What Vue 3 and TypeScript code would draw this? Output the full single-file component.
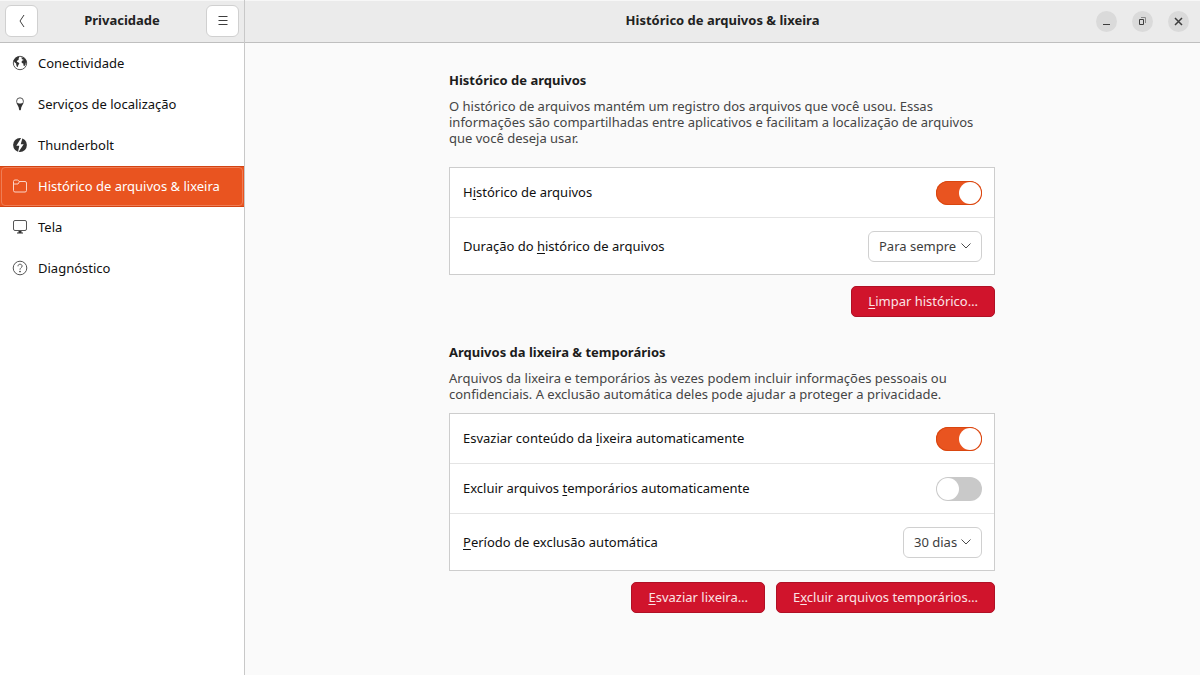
<script setup lang="ts">
import { ref } from 'vue'

interface Mnemonic {
  before: string
  key: string
  after: string
}

interface NavItem {
  id: string
  label: string
}

const navItems: NavItem[] = [
  { id: 'connectivity', label: 'Conectividade' },
  { id: 'location', label: 'Serviços de localização' },
  { id: 'thunderbolt', label: 'Thunderbolt' },
  { id: 'history', label: 'Histórico de arquivos & lixeira' },
  { id: 'screen', label: 'Tela' },
  { id: 'diagnostics', label: 'Diagnóstico' },
]

const active = ref('history')

const keepHistory = ref(true)
const emptyTrash = ref(true)
const deleteTemp = ref(false)
const historyDuration = ref('Para sempre')
const deletePeriod = ref('30 dias')

const durations = ['1 dia', '7 dias', '30 dias', 'Para sempre']
const periods = ['1 hora', '1 dia', '7 dias', '30 dias']

const trashButtons: Mnemonic[] = [
  { before: '', key: 'E', after: 'svaziar lixeira…' },
  { before: 'E', key: 'x', after: 'cluir arquivos temporários…' },
]
</script>

<template>
  <div class="window">
    <aside class="sidebar">
      <header class="bar side-bar">
        <button class="tool" type="button" aria-label="Voltar">
          <svg width="16" height="16" viewBox="0 0 16 16"><path d="M10 2 6 8l4 6" /></svg>
        </button>
        <h2 class="bar-title">Privacidade</h2>
        <button class="tool" type="button" aria-label="Menu">
          <svg width="16" height="16" viewBox="0 0 16 16"><path d="M3.5 3.5h9M3.5 7.5h9M3.5 11.5h9" /></svg>
        </button>
      </header>
      <nav class="nav">
        <a
          v-for="item in navItems"
          :key="item.id"
          href="#"
          class="nav-item"
          :class="{ active: item.id === active }"
          :aria-current="item.id === active ? 'page' : undefined"
          @click.prevent="active = item.id"
        >
          <svg class="nav-icon" width="16" height="16" viewBox="0 0 16 16" aria-hidden="true">
            <g v-if="item.id === 'connectivity'">
              <circle class="line" cx="8" cy="8" r="6.7" />
              <path class="solid" d="M1.6 5.6 3.8 2.6l2.6-1 .9.8L6.4 4l.4.8-1.5.8-.5 1.2 1.7.7.9 1.1-1.1 1.3-.5 1.8-.8.4-.7-2-.2-1.7L2.500 7.300z" />
              <path class="solid" d="m9.400 2.300 2.700.400 1.900 2.200.7 2.600-.9.200-.3 2-1.300 1.500-.7-.6-.2-2-1.400-.7-.4-1.200.9-1.300 1.100-.2-.4-.9-1.100.1z" />
            </g>
            <g v-else-if="item.id === 'location'">
              <path class="line" d="M4.6 5.2a3.4 3.4 0 0 1 6.8 0c0 1-.4 1.9-.9 2.8h-5c-.5-.9-.9-1.8-.9-2.8z" />
              <path class="solid" d="M4.7 7 8 8l3.300-1c-.5 1.900-2.300 3.600-2.400 6.700L8 14.500l-.9-.8C7 10.600 5.200 8.900 4.700 7z" />
            </g>
            <g v-else-if="item.id === 'thunderbolt'">
              <circle class="solid" cx="8" cy="8" r="6.9" />
              <path class="bolt" d="M9.800 0 4.300 8.700h3L5.800 16l5.900-8.700h-3L10.800 0z" />
            </g>
            <g v-else-if="item.id === 'history'">
              <path class="line" d="M1.500 12.500v-9q0-1.500 1.500-1.500h2.500q1 0 1.500 1.500H13q1.500 0 1.500 1.500v7.500q0 1.500-1.500 1.500H3q-1.500 0-1.500-1.500zM1.500 6h4.500l1.500-2.500" />
            </g>
            <g v-else-if="item.id === 'screen'">
              <rect class="line" x="1.5" y="1.5" width="13" height="10" rx="1.5" />
              <path class="solid" d="M6.500 12h3v1.500H11v1H5v-1h1.500z" />
            </g>
            <g v-else>
              <circle class="line" cx="8" cy="8" r="6.8" />
              <path class="line" d="M6 6.300C6 4.900 6.900 4.200 8 4.200s2.100.7 2.100 1.900C10.100 7.700 8 7.700 8 9.700" />
              <circle class="solid" cx="8" cy="11.6" r=".8" />
            </g>
          </svg>
          <span>{{ item.label }}</span>
        </a>
      </nav>
    </aside>

    <div class="page">
      <header class="bar page-bar">
        <h1 class="bar-title">Histórico de arquivos &amp; lixeira</h1>
        <div class="controls">
          <button class="control" type="button" aria-label="Minimizar">
            <svg width="21" height="21" viewBox="0 0 21 21"><path d="M7 13.500h7" /></svg>
          </button>
          <button class="control" type="button" aria-label="Restaurar">
            <svg width="21" height="21" viewBox="0 0 21 21">
              <path d="M7.500 8.500h4v5h-4z" /><path class="faint" d="M9 6.500h4.500V12" />
            </svg>
          </button>
          <button class="control" type="button" aria-label="Fechar">
            <svg width="21" height="21" viewBox="0 0 21 21"><path class="cross" d="m7 7 7 7m0-7-7 7" /></svg>
          </button>
        </div>
      </header>

      <main class="content">
        <section class="group">
          <h3 class="group-title">Histórico de arquivos</h3>
          <p class="group-text history-text">
            O histórico de arquivos mantém um registro dos arquivos que você usou. Essas<br />
            informações são compartilhadas entre aplicativos e facilitam a localização de arquivos<br />
            que você deseja usar.
          </p>
          <div class="card">
            <div class="row">
              <label for="keep-history">H<u>i</u>stórico de arquivos</label>
              <input id="keep-history" v-model="keepHistory" class="switch" type="checkbox" role="switch" />
            </div>
            <div class="row tall">
              <label for="duration">Duração do <u>h</u>istórico de arquivos</label>
              <span class="select">
                <select id="duration" v-model="historyDuration" class="wide">
                  <option v-for="d in durations" :key="d">{{ d }}</option>
                </select>
                <svg width="10" height="6" viewBox="0 0 10 6" aria-hidden="true"><path d="m.5.500 4.500 4.500L9.500.500" /></svg>
              </span>
            </div>
          </div>
          <div class="actions">
            <button class="danger" type="button"><u>L</u>impar histórico…</button>
          </div>
        </section>

        <section class="group">
          <h3 class="group-title">Arquivos da lixeira &amp; temporários</h3>
          <p class="group-text">
            Arquivos da lixeira e temporários às vezes podem incluir informações pessoais ou<br />
            confidenciais. A exclusão automática deles pode ajudar a proteger a privacidade.
          </p>
          <div class="card">
            <div class="row">
              <label for="empty-trash">Esvaziar conteúdo da <u>l</u>ixeira automaticamente</label>
              <input id="empty-trash" v-model="emptyTrash" class="switch" type="checkbox" role="switch" />
            </div>
            <div class="row">
              <label for="delete-temp">Excluir arquivos <u>t</u>emporários automaticamente</label>
              <input id="delete-temp" v-model="deleteTemp" class="switch" type="checkbox" role="switch" />
            </div>
            <div class="row tall">
              <label for="period"><u>P</u>eríodo de exclusão automática</label>
              <span class="select">
                <select id="period" v-model="deletePeriod" class="narrow">
                  <option v-for="p in periods" :key="p">{{ p }}</option>
                </select>
                <svg width="10" height="6" viewBox="0 0 10 6" aria-hidden="true"><path d="m.5.500 4.500 4.500L9.500.500" /></svg>
              </span>
            </div>
          </div>
          <div class="actions">
            <button v-for="b in trashButtons" :key="b.after" class="danger" type="button">{{ b.before }}<u>{{ b.key }}</u>{{ b.after }}</button>
          </div>
        </section>
      </main>
    </div>
  </div>
</template>

<style>
body {
  margin: 0;
  background: #fafafa;
}
</style>

<style scoped>
.window,
.window * {
  box-sizing: border-box;
}

.window {
  display: grid;
  grid-template-columns: 245px minmax(0, 1fr);
  min-height: 100vh;
  font-family: 'Noto Sans', 'Open Sans', sans-serif;
  font-size: 13px;
  color: #101010;
}

button,
select {
  font: inherit;
}

h1,
h2,
h3,
p {
  margin: 0;
}

u {
  text-underline-offset: 2px;
  text-decoration-thickness: 1px;
  text-decoration-skip-ink: none;
}

svg {
  display: block;
  fill: none;
}

.sidebar {
  background: #fff;
  border-right: 1px solid #c8c8c8;
}

.bar {
  height: 43px;
  background: #ebebeb;
  border-bottom: 1px solid #bfbfbf;
  box-shadow: inset 0 1px #f7f7f7;
}

.bar-title {
  padding-bottom: 2px;
  font-size: 13px;
  line-height: 20px;
  font-weight: 700;
  color: #222;
  text-align: center;
  white-space: nowrap;
}

.side-bar {
  display: flex;
  align-items: center;
  justify-content: space-between;
  padding: 0 5px;
}

.tool {
  display: grid;
  place-items: center;
  width: 33px;
  height: 32px;
  padding: 0;
  background: #fff;
  border: 1px solid #d0d0d0;
  border-radius: 6px;
}

.tool path {
  stroke: #3d3d3d;
}

.nav-item {
  display: flex;
  align-items: center;
  gap: 10px;
  height: 41px;
  padding: 0 12px 2px;
  color: #101010;
  text-decoration: none;
  white-space: nowrap;
}

.line {
  stroke: #555;
}

.solid {
  fill: #333;
}

.bolt {
  fill: #fff;
}

.nav-item.active {
  color: #fff;
  background: #e95420;
  box-shadow: inset 0 1px #d24312, inset 0 -1px #d24312;
  position: relative;
}

.nav-item.active::after {
  content: '';
  position: absolute;
  inset: 1px;
  border: 1px solid #ef7d55;
  border-radius: 4px;
}

.active .line {
  stroke: #fbd3c5;
}

.active .solid {
  fill: #fff;
}

.active .bolt {
  fill: #e95420;
}

.page {
  background: #fafafa;
}

.page-bar {
  display: grid;
  grid-template-columns: 1fr auto 1fr;
  align-items: center;
  padding: 0 11px;
}

.page-bar .bar-title {
  grid-column: 2;
}

.controls {
  display: flex;
  justify-content: flex-end;
  gap: 15px;
}

.control {
  width: 21px;
  height: 21px;
  padding: 0;
  background: #dadada;
  border: 0;
  border-radius: 50%;
}

.control path {
  stroke: #3d3d3d;
}

.control .faint {
  stroke: #8a8a8a;
}

.control .cross {
  stroke-width: 1.5;
}

.content {
  display: grid;
  gap: 25px;
  width: 100%;
  max-width: 547px;
  margin: 0 auto;
  padding: 27px 1px 27px 0;
}

.group-title {
  font-size: 13px;
  line-height: 20px;
  font-weight: 700;
  color: #1c1c1c;
}

.group-text {
  margin: 8px 0 11px;
  line-height: 16px;
  color: #454545;
}

.history-text {
  margin-bottom: 21px;
}

.card {
  background: #fff;
  border: 1px solid #cdcdcd;
}

.row {
  display: flex;
  align-items: center;
  justify-content: space-between;
  height: 50px;
  padding: 0 12px 0 13px;
  border-bottom: 1px solid #e4e4e4;
}

.row label {
  padding-bottom: 1px;
}

.row.tall {
  height: 56px;
  border-bottom: 0;
}

.switch {
  appearance: none;
  display: flex;
  width: 46px;
  height: 24px;
  margin: 0;
  padding: 1px;
  background: #c9c9c9;
  border-radius: 12px;
}

.switch::before {
  content: '';
  width: 22px;
  height: 22px;
  background: #fff;
  border-radius: 50%;
}

.switch:checked {
  justify-content: flex-end;
  background: #e95420;
  box-shadow: inset 0 0 0 1px #d9460f;
}

.select {
  display: grid;
  align-items: center;
}

.select select,
.select svg {
  grid-area: 1 / 1;
}

.select select {
  appearance: none;
  height: 31px;
  padding: 0 10px 1px;
  color: #3d3d3d;
  background: #fff;
  border: 1px solid #d0d0d0;
  border-radius: 6px;
}

.select svg {
  justify-self: end;
  margin-right: 11px;
  pointer-events: none;
}

.select path {
  stroke: #4a4a4a;
}

.wide {
  width: 114px;
}

.narrow {
  width: 79px;
}

.actions {
  display: flex;
  justify-content: flex-end;
  gap: 11px;
  margin-top: 11px;
}

.danger {
  height: 31px;
  padding: 0 16px 2px;
  color: #fbe3e6;
  background: #d0142c;
  border: 1px solid #b01025;
  border-radius: 5px;
  white-space: nowrap;
}
</style>
